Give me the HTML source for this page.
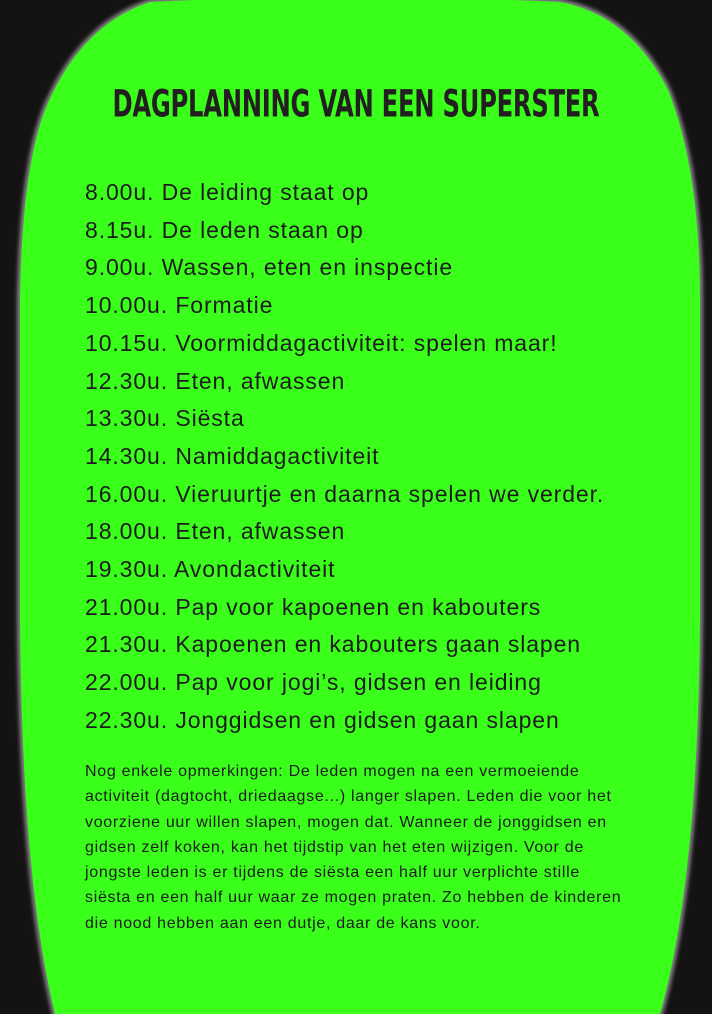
<!DOCTYPE html>
<html><head><meta charset="utf-8"><style>
html,body{margin:0;padding:0;}
body{width:712px;height:1014px;background:#141212;position:relative;overflow:hidden;font-family:"Liberation Sans",sans-serif;color:#1c1c1c;}
svg{position:absolute;left:0;top:0;}
.title{position:absolute;left:0;width:712px;top:83px;text-align:center;font-family:"DejaVu Sans Condensed","DejaVu Sans",sans-serif;font-weight:bold;font-size:27px;letter-spacing:-0.3px;transform:scaleY(1.4);transform-origin:top;color:#231f20;white-space:nowrap;}
.list{position:absolute;left:85px;top:174px;font-size:23px;letter-spacing:0.9px;line-height:37.7px;white-space:nowrap;}
.para{position:absolute;left:85px;top:759px;font-size:16px;letter-spacing:0.7px;line-height:25.3px;white-space:nowrap;}
</style></head><body>
<svg width="712" height="1014" viewBox="0 0 712 1014">
<defs><filter id="b"><feGaussianBlur stdDeviation="2"/></filter></defs>
<path d="M150 2 Q350 -8 560 2 Q630 15 668 90 Q700 170 700 300 L700 620 Q698 880 660 1014 L55 1014 Q22 880 20 620 L20 300 Q22 170 45 110 Q80 25 150 2 Z" fill="none" stroke="#9a9a9a" stroke-width="5" filter="url(#b)"/>
<path d="M150 2 Q350 -8 560 2 Q630 15 668 90 Q700 170 700 300 L700 620 Q698 880 660 1014 L55 1014 Q22 880 20 620 L20 300 Q22 170 45 110 Q80 25 150 2 Z" fill="#3aff1a"/>
</svg>
<div class="title">DAGPLANNING VAN EEN SUPERSTER</div>
<div class="list">
8.00u. De leiding staat op<br>
8.15u. De leden staan op<br>
9.00u. Wassen, eten en inspectie<br>
10.00u. Formatie<br>
10.15u. Voormiddagactiviteit: spelen maar!<br>
12.30u. Eten, afwassen<br>
13.30u. Siësta<br>
14.30u. Namiddagactiviteit<br>
16.00u. Vieruurtje en daarna spelen we verder.<br>
18.00u. Eten, afwassen<br>
19.30u. Avondactiviteit<br>
21.00u. Pap voor kapoenen en kabouters<br>
21.30u. Kapoenen en kabouters gaan slapen<br>
22.00u. Pap voor jogi’s, gidsen en leiding<br>
22.30u. Jonggidsen en gidsen gaan slapen
</div>
<div class="para">
Nog enkele opmerkingen: De leden mogen na een vermoeiende<br>
activiteit (dagtocht, driedaagse...) langer slapen. Leden die voor het<br>
voorziene uur willen slapen, mogen dat. Wanneer de jonggidsen en<br>
gidsen zelf koken, kan het tijdstip van het eten wijzigen. Voor de<br>
jongste leden is er tijdens de siësta een half uur verplichte stille<br>
siësta en een half uur waar ze mogen praten. Zo hebben de kinderen<br>
die nood hebben aan een dutje, daar de kans voor.
</div>
</body></html>
